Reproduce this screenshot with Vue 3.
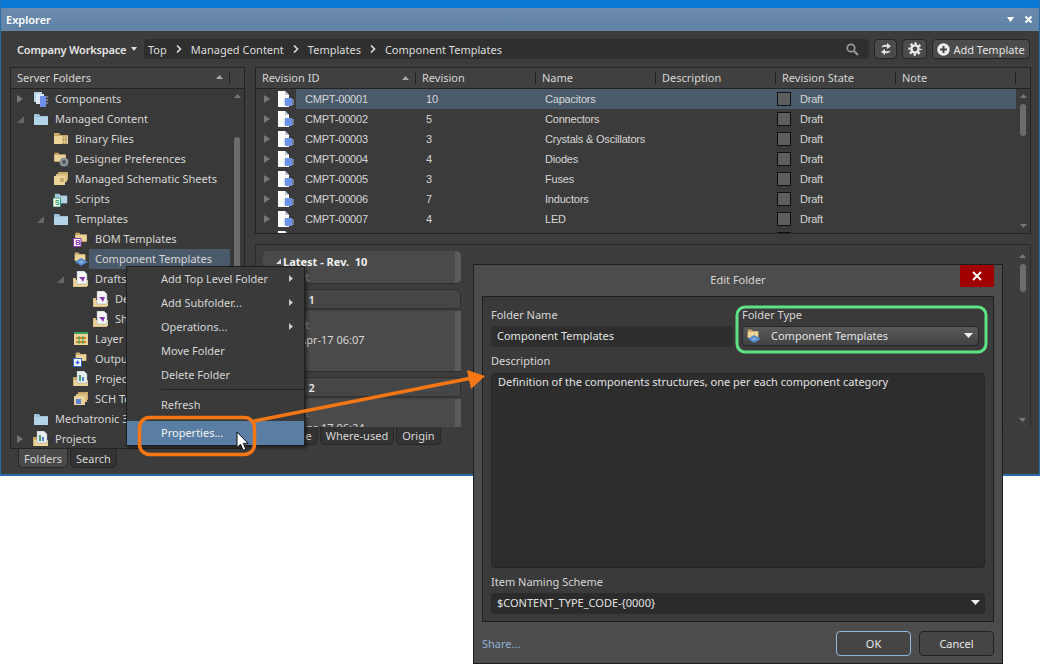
<script setup>
const tree = [
  { label: 'Components', level: 0, arrow: 'right', icon: 'i-comps' },
  { label: 'Managed Content', level: 0, arrow: 'down', icon: 'i-folder-blue' },
  { label: 'Binary Files', level: 1, icon: 'i-binary' },
  { label: 'Designer Preferences', level: 1, icon: 'i-prefs' },
  { label: 'Managed Schematic Sheets', level: 1, icon: 'i-sheets' },
  { label: 'Scripts', level: 1, icon: 'i-scripts' },
  { label: 'Templates', level: 1, arrow: 'down', icon: 'i-folder-blue' },
  { label: 'BOM Templates', level: 2, icon: 'i-bom' },
  { label: 'Component Templates', level: 2, icon: 'i-comp', selected: true },
  { label: 'Drafts', level: 2, arrow: 'down', icon: 'i-draft' },
  { label: 'Designs', level: 3, icon: 'i-draft' },
  { label: 'Sheets', level: 3, icon: 'i-draft' },
  { label: 'Layer Stacks', level: 2, icon: 'i-layer' },
  { label: 'Output Jobs', level: 2, icon: 'i-output' },
  { label: 'Projects', level: 2, icon: 'i-project' },
  { label: 'SCH Templates', level: 2, icon: 'i-sch' },
  { label: 'Mechatronic 3D', level: 0, icon: 'i-folder-blue' },
  { label: 'Projects', level: 0, arrow: 'right', icon: 'i-project' }
]

const columns = ['Revision ID', 'Revision', 'Name', 'Description', 'Revision State', 'Note']

const rows = [
  { id: 'CMPT-00001', rev: 10, name: 'Capacitors' },
  { id: 'CMPT-00002', rev: 5, name: 'Connectors' },
  { id: 'CMPT-00003', rev: 3, name: 'Crystals & Oscillators' },
  { id: 'CMPT-00004', rev: 4, name: 'Diodes' },
  { id: 'CMPT-00005', rev: 3, name: 'Fuses' },
  { id: 'CMPT-00006', rev: 7, name: 'Inductors' },
  { id: 'CMPT-00007', rev: 4, name: 'LED' },
  { id: 'CMPT-00008', rev: 2, name: 'Misc' }
]

const crumbs = ['Top', 'Managed Content', 'Templates', 'Component Templates']

const menu = [
  { label: 'Add Top Level Folder', sub: true },
  { label: 'Add Subfolder...', sub: true },
  { label: 'Operations...', sub: true },
  { label: 'Move Folder' },
  { label: 'Delete Folder' }
]
</script>

<template>
  <div class="page">
    <svg class="defs" aria-hidden="true">
      <symbol id="i-folder-blue" viewBox="0 0 16 16">
        <path d="M1 3h5l1.500 2H15v9H1z" fill="#9cc3dc" />
        <path d="M1 6h14v8H1z" fill="#b4d4e8" />
      </symbol>
      <symbol id="i-folder-yellow" viewBox="0 0 16 16">
        <path d="M1 2h5l1.500 2H15v9H1z" fill="#c9a868" />
        <path d="M1 5h14v8H1z" fill="#ecd39a" />
      </symbol>
      <symbol id="i-comps" viewBox="0 0 16 16">
        <path d="M1 1h8v10H1z" fill="#b4d4e8" />
        <path d="M3 3h8v10H3z" fill="#dfe9f2" />
        <path d="M7 5h6v11H7z" fill="#6f8fe8" />
        <path d="M13 6h2M13 9h2M13 12h2" stroke="#aab" />
      </symbol>
      <symbol id="i-doc-chip" viewBox="0 0 16 16">
        <path d="M0 0h7l4 4v12H0z" fill="#fff" />
        <path d="M7 0v4h4z" fill="#b9c6d6" />
        <path d="M7 7h7v8H7z" fill="#6f93ea" />
        <path d="M5.500 9h1.500M5.500 11h1.500M5.500 13h1.500M14 9h2M14 11h2M14 13h2" stroke="#a9bdf0" />
      </symbol>
      <symbol id="i-binary" viewBox="0 0 16 16">
        <use href="#i-folder-yellow" width="16" height="16" />
        <text x="9" y="8.500" class="icon-text" fill="#8a6a30">10</text>
        <text x="9" y="13" class="icon-text" fill="#8a6a30">10</text>
      </symbol>
      <symbol id="i-prefs" viewBox="0 0 16 16">
        <use href="#i-folder-yellow" width="14" height="13" />
        <circle cx="11" cy="11" r="4.500" fill="#8d959c" />
        <circle cx="11" cy="11" r="2" fill="#4f565c" />
      </symbol>
      <symbol id="i-sheets" viewBox="0 0 16 16">
        <path d="M5 1h10v8H5z" fill="#c9a868" />
        <path d="M3 3h11v8H3z" fill="#dcc083" />
        <path d="M1 5h11v9H1z" fill="#ecd39a" />
        <path d="M7 8h4M7 10h4" stroke="#9a7c45" />
      </symbol>
      <symbol id="i-scripts" viewBox="0 0 16 16">
        <use href="#i-folder-blue" width="16" height="14" />
        <path d="M0 7h7.500v9H0z" fill="#fff" stroke="#2f9a62" />
        <text x="1.800" y="14.300" class="icon-text-b" fill="#2f9a62">S</text>
      </symbol>
      <symbol id="i-bom" viewBox="0 0 16 16">
        <use href="#i-folder-yellow" width="16" height="13" />
        <path d="M.500 7.500h7.500v8H.500z" fill="#fff" stroke="#8a35b0" />
        <text x="2.200" y="14.200" class="icon-text-b" fill="#8a35b0">B</text>
      </symbol>
      <symbol id="i-comp" viewBox="0 0 16 16">
        <use href="#i-folder-yellow" width="14" height="12" />
        <path d="M2 11l6-4 7 4-7 4z" fill="#4f85c9" />
        <path d="M5 11l3-2 4 2-4 2z" fill="#7fa8dc" />
      </symbol>
      <symbol id="i-draft" viewBox="0 0 16 16">
        <path d="M0 7h3v8h11v1H0z" fill="#dcc083" />
        <path d="M1 9h14v6H1z" fill="#ecd39a" />
        <path d="M4 0h7l3 3v10H4z" fill="#f4f6f8" stroke="#9aa3ad" stroke-width=".5" />
        <path d="M6 6h6l-2 5-1.500-2.500z" fill="#8a35b0" />
      </symbol>
      <symbol id="i-layer" viewBox="0 0 16 16">
        <path d="M1 1h14v2H1z" fill="#3ca45a" />
        <path d="M1 3h14v11H1z" fill="#ecd39a" />
        <path d="M3 6h10v2H3zM3 10h10v2H3z" fill="#c8862f" />
        <path d="M6 5v8M10 5v8" stroke="#3ca45a" />
      </symbol>
      <symbol id="i-output" viewBox="0 0 16 16">
        <use href="#i-folder-yellow" width="16" height="12" />
        <path d="M.500 7.500h8v8h-8z" fill="#fff" stroke="#2a66c8" />
        <path d="M2.500 11.500h4M4.500 9.500v4" stroke="#2a66c8" stroke-width="1.400" />
      </symbol>
      <symbol id="i-project" viewBox="0 0 16 16">
        <path d="M0 6h4v8h11v1H0z" fill="#c9a868" />
        <path d="M1 9h14v6H1z" fill="#ecd39a" />
        <path d="M4 0h7l3 3v9H4z" fill="#e9edf1" stroke="#9aa3ad" stroke-width=".5" />
        <path d="M6 4h2v6H6z" fill="#4d9a6c" />
        <path d="M9 6h2v4H9z" fill="#4f85c9" />
      </symbol>
      <symbol id="i-sch" viewBox="0 0 16 16">
        <path d="M5 1h10v8H5z" fill="#c9a868" />
        <path d="M3 3h11v8H3z" fill="#dcc083" />
        <path d="M1 5h11v9H1z" fill="#ecd39a" />
        <path d="M3 8h5v5H3z" fill="#5a84d8" />
      </symbol>
    </svg>

    <div class="explorer">
      <header class="titlebar">
        <span class="title">Explorer</span>
        <span class="title-tools">
          <svg width="9" height="7" viewBox="0 0 9 7"><path d="M1 1h7L4.500 6z" fill="#fff" /></svg>
          <svg width="9" height="9" viewBox="0 0 9 9"><path d="M1.500 1.500l6 6M7.500 1.500l-6 6" stroke="#fff" stroke-width="2" /></svg>
        </span>
      </header>

      <div class="toolbar">
        <span class="workspace">Company Workspace</span>
        <svg class="workspace-caret" width="6" height="4" viewBox="0 0 6 4"><path d="M0 0h6L3 4z" fill="#ddd" /></svg>
        <div class="crumbs">
          <template v-for="(crumb, i) in crumbs" :key="crumb">
            <svg v-if="i" class="chevron" width="6" height="8" viewBox="0 0 6 8"><path d="M1 .500L4.500 4 1 7.500" fill="none" stroke="#ddd" stroke-width="1.600" /></svg>
            <span>{{ crumb }}</span>
          </template>
          <svg class="search" width="13" height="13" viewBox="0 0 13 13"><circle cx="5" cy="5" r="3.700" fill="none" stroke="#999" stroke-width="1.700" /><path d="M8 8l4 4" stroke="#999" stroke-width="2.200" /></svg>
        </div>
        <button class="tool-btn sync">
          <svg width="12" height="14" viewBox="0 0 12 14"><path d="M1.500 5.500C2 3 4.500 2.200 7 3V1l4 3.200L7 7V5C5 4.500 3.500 4.500 1.500 5.500zM10.500 8.500C10 11 7.500 11.800 5 11v2L1 9.800 5 7v2c2 .5 3.500.5 5.500-.5z" fill="#e4e4e4" /></svg>
        </button>
        <button class="tool-btn gear">
          <svg width="14" height="14" viewBox="0 0 14 14"><circle cx="7" cy="7" r="3.600" fill="none" stroke="#eee" stroke-width="2.400" /><circle cx="7" cy="7" r="5.700" fill="none" stroke="#eee" stroke-width="2" stroke-dasharray="2.400 2.075" stroke-dashoffset="1.200" /></svg>
        </button>
        <button class="tool-btn add">
          <svg width="13" height="13" viewBox="0 0 13 13"><circle cx="6.500" cy="6.500" r="6.200" fill="#eee" /><path d="M6.500 3v7M3 6.500h7" stroke="#444" stroke-width="2" /></svg>
          Add Template
        </button>
      </div>

      <div class="panes">
        <div class="left-col">
          <section class="tree-panel">
            <div class="tree-head">
              <span>Server Folders</span>
              <svg width="7" height="4" viewBox="0 0 7 4"><path d="M0 4h7L3.500 0z" fill="#aaa" /></svg>
            </div>
            <div class="tree-body">
              <ul class="tree">
                <li v-for="(item, i) in tree" :key="i" class="tree-row" :style="{ paddingLeft: item.level * 20 + 5 + 'px' }">
                  <span class="twist">
                    <svg v-if="item.arrow === 'right'" width="6" height="8" viewBox="0 0 6 8"><path d="M0 0l6 4-6 4z" fill="#777" /></svg>
                    <svg v-if="item.arrow === 'down'" width="7" height="7" viewBox="0 0 7 7"><path d="M7 0v7H0z" fill="#666" /></svg>
                  </span>
                  <svg class="tree-icon" width="16" height="16"><use :href="'#' + item.icon" width="16" height="16" /></svg>
                  <span class="tree-label" :class="{ selected: item.selected }">{{ item.label }}</span>
                </li>
              </ul>
              <div class="scrollbar tree-scroll">
                <svg width="7" height="4" viewBox="0 0 7 4"><path d="M0 4h7L3.500 0z" fill="#777" /></svg>
                <i class="thumb"></i>
              </div>
            </div>
          </section>
          <nav class="tabs tabs-left">
            <span class="tab active">Folders</span>
            <span class="tab">Search</span>
          </nav>
        </div>

        <div class="right-col">
          <section class="grid-panel">
            <div class="grid-head">
              <span v-for="col in columns" :key="col" class="head-cell">
                {{ col }}
                <svg v-if="col === 'Revision ID'" width="7" height="4" viewBox="0 0 7 4"><path d="M0 4h7L3.500 0z" fill="#aaa" /></svg>
              </span>
            </div>
            <div class="grid-body">
              <div class="grid-rows">
                <div v-for="(row, i) in rows" :key="row.id" class="grid-row" :class="{ selected: i === 0 }">
                  <span class="cell id-cell">
                    <svg class="row-arrow" width="6" height="8" viewBox="0 0 6 8"><path d="M0 0l6 4-6 4z" fill="#777" /></svg>
                    <svg class="row-icon" width="16" height="16"><use href="#i-doc-chip" width="16" height="16" /></svg>
                    <span class="id-text">{{ row.id }}</span>
                  </span>
                  <span class="cell rev-cell">{{ row.rev }}</span>
                  <span class="cell name-cell">{{ row.name }}</span>
                  <span class="cell"></span>
                  <span class="cell state-cell"><i class="swatch"></i>Draft</span>
                  <span class="cell"></span>
                </div>
              </div>
              <div class="scrollbar grid-scroll">
                <svg width="7" height="4" viewBox="0 0 7 4"><path d="M0 4h7L3.500 0z" fill="#777" /></svg>
                <i class="thumb"></i>
                <svg class="scroll-down" width="7" height="4" viewBox="0 0 7 4"><path d="M0 0h7L3.500 4z" fill="#777" /></svg>
              </div>
            </div>
          </section>

          <section class="details-panel">
            <div class="cards">
              <article class="card">
                <div class="card-body first">
                  <strong><svg class="latest-twist" width="5" height="5" viewBox="0 0 5 5"><path d="M5 0v5H0z" fill="#ddd" /></svg>Latest - Rev.&nbsp; 10</strong>
                  <span class="muted">Draft</span>
                </div>
              </article>
              <article class="card">
                <div class="card-head">Rev.&nbsp; 1</div>
                <div class="card-body tall">
                  <span class="muted">Draft</span>
                  <span>04-Apr-17 06:07</span>
                </div>
              </article>
              <article class="card">
                <div class="card-head">Rev.&nbsp; 2</div>
                <div class="card-body tall">
                  <span class="muted">Draft</span>
                  <span>04-Apr-17 06:24</span>
                </div>
              </article>
            </div>
            <div class="scrollbar details-scroll">
              <svg width="7" height="4" viewBox="0 0 7 4"><path d="M0 4h7L3.500 0z" fill="#777" /></svg>
              <i class="thumb"></i>
              <svg class="scroll-down" width="7" height="4" viewBox="0 0 7 4"><path d="M0 0h7L3.500 4z" fill="#777" /></svg>
            </div>
          </section>
          <nav class="tabs tabs-right">
            <span class="tab">Lifecycle</span>
            <span class="tab">Where-used</span>
            <span class="tab">Origin</span>
          </nav>
        </div>
      </div>
    </div>

    <!-- context menu -->
    <div class="menu">
      <div v-for="item in menu" :key="item.label" class="menu-item">
        {{ item.label }}
        <svg v-if="item.sub" width="4" height="7" viewBox="0 0 4 7"><path d="M0 0l4 3.500L0 7z" fill="#ccc" /></svg>
      </div>
      <hr class="menu-sep" />
      <div class="menu-item refresh">Refresh</div>
      <div class="menu-item active">Properties...</div>
    </div>

    <!-- dialog -->
    <div class="dialog">
      <div class="dialog-title">
        Edit Folder
        <button class="dialog-close">
          <svg width="10" height="10" viewBox="0 0 10 10"><path d="M1 1l8 8M9 1L1 9" stroke="#fff" stroke-width="1.800" /></svg>
        </button>
      </div>
      <div class="dialog-panel">
        <div class="field-row">
          <div class="field">
            <label>Folder Name</label>
            <div class="input">Component Templates</div>
          </div>
          <div class="field type-field">
            <label>Folder Type</label>
            <div class="select light">
              <svg class="select-icon" width="16" height="16"><use href="#i-comp" width="16" height="16" /></svg>
              Component Templates
              <svg class="select-caret" width="9" height="5" viewBox="0 0 9 5"><path d="M0 0h9L4.500 5z" fill="#eee" /></svg>
            </div>
          </div>
        </div>
        <label class="desc-label">Description</label>
        <div class="textarea">Definition of the components structures, one per each component category</div>
        <label class="scheme-label">Item Naming Scheme</label>
        <div class="select scheme">
          $CONTENT_TYPE_CODE-{0000}
          <svg class="select-caret" width="9" height="5" viewBox="0 0 9 5"><path d="M0 0h9L4.500 5z" fill="#eee" /></svg>
        </div>
      </div>
      <div class="dialog-foot">
        <a class="share">Share...</a>
        <button class="btn primary">OK</button>
        <button class="btn">Cancel</button>
      </div>
    </div>

    <!-- callouts drawn over everything -->
    <svg class="callouts" width="1040" height="664" viewBox="0 0 1040 664">
      <rect x="737" y="307" width="249" height="45" rx="8" fill="none" stroke="#5fe283" stroke-width="3" />
      <rect x="139.500" y="417.500" width="115" height="37" rx="10" fill="none" stroke="#f57615" stroke-width="3.500" />
      <path d="M254 421L472 378" stroke="#f57615" stroke-width="3.500" />
      <path d="M485 376L467 370 471 389z" fill="#f57615" />
      <path d="M237 432v15.500l3.600-3.200 2.500 6 2.700-1.100-2.500-5.800h4.800z" fill="#fff" stroke="#111" stroke-width="1" />
    </svg>
  </div>
</template>

<style scoped>
.page {
  position: relative;
  width: 1040px;
  height: 664px;
  overflow: hidden;
  background: #fff;
  font-family: "Noto Sans", "Liberation Sans", sans-serif;
  font-size: 11px;
  color: #d6d6d6;
}

.defs {
  display: none;
}

.icon-text {
  font-family: "Liberation Sans", sans-serif;
  font-size: 4.500px;
}

.icon-text-b {
  font-family: "Liberation Sans", sans-serif;
  font-size: 7.500px;
  font-weight: 700;
}

button {
  font: inherit;
  color: inherit;
}

/* explorer window */
.explorer {
  height: 476px;
  box-sizing: border-box;
  border: 1px solid #2a6ba6;
  border-top: 8px solid #0a78d4;
  border-bottom-width: 2px;
  background: #3c3c3c;
  display: flex;
  flex-direction: column;
}

.titlebar {
  height: 23px;
  flex: none;
  display: flex;
  align-items: center;
  justify-content: space-between;
  padding: 0 6px 0 5px;
  background: linear-gradient(#6b8bad, #5f82a6);
}

.title {
  font-weight: 600;
  color: #fff;
}

.title-tools {
  display: flex;
  align-items: center;
  gap: 9px;
}

.toolbar {
  height: 36px;
  flex: none;
  display: flex;
  align-items: center;
  padding: 0 9px 0 16px;
}

.workspace {
  width: 114px;
  flex: none;
  font-weight: 600;
  letter-spacing: -0.2px;
  color: #e4e4e4;
  white-space: nowrap;
}

.workspace-caret {
  margin: 0 7px 1px 0;
  flex: none;
}

.crumbs {
  flex: 1;
  height: 20px;
  display: flex;
  align-items: center;
  gap: 9px;
  padding: 0 10px 0 4px;
  background: #2f2f2f;
  border-radius: 4px;
  color: #dcdcdc;
}

.search {
  margin-left: auto;
}

.tool-btn {
  height: 20px;
  box-sizing: border-box;
  margin-left: 5px;
  padding: 0;
  display: flex;
  align-items: center;
  justify-content: center;
  background: #4b4b4b;
  border: 1px solid #252525;
  border-radius: 4px;
}

.sync {
  width: 23px;
}

.gear {
  width: 25px;
}

.add {
  width: 98px;
  gap: 3px;
  color: #e4e4e4;
}

.panes {
  flex: 1;
  min-height: 0;
  display: flex;
  gap: 10px;
  padding: 0 8px 0 9px;
}

.left-col {
  width: 235px;
  flex: none;
}

.right-col {
  flex: 1;
  min-width: 0;
}

/* server folder tree */
.tree-panel {
  height: 382px;
  box-sizing: border-box;
  border: 1px solid #232323;
  background: #393939;
  display: flex;
  flex-direction: column;
}

.tree-head {
  height: 21px;
  flex: none;
  box-sizing: border-box;
  padding: 0 0 1px 6px;
  display: flex;
  align-items: center;
  border-bottom: 1px solid #232323;
  background: #404040;
  position: relative;
}

.tree-head svg {
  position: absolute;
  left: 205px;
  top: 7px;
}

.tree-head::after {
  content: "";
  position: absolute;
  left: 218px;
  top: 4px;
  height: 12px;
  border-left: 1px solid #222;
}

.tree-body {
  flex: 1;
  min-height: 0;
  display: flex;
}

.tree {
  flex: 1;
  min-width: 0;
  list-style: none;
  margin: 0;
  padding: 0;
  overflow: hidden;
}

.tree-row {
  height: 20px;
  display: flex;
  align-items: center;
  white-space: nowrap;
}

.twist {
  width: 16px;
  flex: none;
  display: flex;
  align-items: center;
  padding-left: 1px;
  box-sizing: border-box;
}

.tree-icon {
  flex: none;
  margin: 0 0 0 1px;
}

.tree-label {
  flex: 1;
  height: 20px;
  line-height: 20px;
  padding-left: 6px;
}

.tree-label.selected {
  background: #4a5a6a;
}

.scrollbar {
  flex: none;
  display: flex;
  flex-direction: column;
  align-items: center;
  box-sizing: border-box;
}

.thumb {
  display: block;
  width: 6px;
  background: #6c6c6c;
  border-radius: 3px;
}

.tree-scroll {
  width: 14px;
  padding-top: 5px;
}

.tree-scroll .thumb {
  height: 303px;
  margin-top: 39px;
}

/* tabs */
.tabs {
  display: flex;
  gap: 2px;
}

.tabs-left {
  padding-left: 8px;
  height: 19px;
}

.tab {
  height: 100%;
  box-sizing: border-box;
  padding: 0 5px;
  display: flex;
  align-items: center;
  background: #333;
  border: 1px solid #272727;
  border-top: 0;
  border-radius: 0 0 5px 5px;
}

.tab.active {
  background: #4a4a4a;
}

.tabs-right {
  height: 18px;
  justify-content: flex-start;
  padding-left: 7px;
}

/* revisions grid */
.grid-panel {
  height: 167px;
  box-sizing: border-box;
  border: 1px solid #232323;
  background: #3b3b3b;
  margin-bottom: 10px;
  display: flex;
  flex-direction: column;
}

.grid-head {
  height: 21px;
  flex: none;
  box-sizing: border-box;
  display: grid;
  grid-template-columns: 160px repeat(5, 120px) 16px;
  align-items: center;
  border-bottom: 1px solid #232323;
  background: #404040;
  padding-bottom: 1px;
}

.head-cell {
  height: 12px;
  line-height: 12px;
  display: flex;
  align-items: center;
  justify-content: space-between;
  padding: 0 6px;
  border-right: 1px solid #222;
}

.grid-body {
  flex: 1;
  min-height: 0;
  display: flex;
}

.grid-rows {
  width: 760px;
  flex: none;
  overflow: hidden;
}

.grid-row {
  height: 20px;
  display: grid;
  grid-template-columns: 160px repeat(5, 120px);
  font-family: "Liberation Sans", sans-serif;
  font-size: 11px;
  letter-spacing: -0.2px;
}

.grid-row.selected .cell:not(.id-cell),
.grid-row.selected .id-text {
  background: #4a5a6a;
}

.cell {
  display: flex;
  align-items: center;
  height: 20px;
  white-space: nowrap;
}

.row-arrow {
  margin: 0 8px 0 8px;
}

.row-icon {
  flex: none;
  margin-left: 0;
}

.id-text {
  flex: 1;
  height: 20px;
  line-height: 20px;
  margin-left: 2px;
  padding-left: 9px;
}

.rev-cell {
  padding-left: 10px;
}

.name-cell {
  padding-left: 9px;
}

.state-cell {
  padding-left: 1px;
}

.swatch {
  width: 12px;
  height: 12px;
  border: 1px solid #111;
  background: #5e5e5e;
  margin-right: 9px;
}

.grid-scroll {
  flex: 1;
  position: relative;
  padding-top: 5px;
}

.grid-scroll .thumb {
  height: 32px;
  margin-top: 6px;
}

.scroll-down {
  margin-top: auto;
  margin-bottom: 5px;
}

/* revision cards */
.details-panel {
  height: 183px;
  box-sizing: border-box;
  border: 1px solid #2b2b2b;
  border-bottom: 0;
  background: #3d3d3d;
  display: flex;
  overflow: hidden;
}

.cards {
  width: 205px;
  flex: none;
  padding: 6px 0 0 7px;
  box-sizing: border-box;
}

.card {
  width: 198px;
  margin-bottom: 5px;
}

.card-head {
  height: 20px;
  display: flex;
  align-items: center;
  padding-left: 17px;
  box-sizing: border-box;
  background: #464646;
  border: 1px solid #2f2f2f;
  border-radius: 5px 5px 0 0;
  margin-bottom: 2px;
  color: #e8e8e8;
  font-weight: 600;
}

.card-body {
  box-sizing: border-box;
  display: flex;
  flex-direction: column;
  padding-left: 20px;
  background: linear-gradient(to right, #4a4a4a 192px, #5c5c5c 192px);
  border-bottom: 1px solid #2f2f2f;
}

.card-body.first {
  height: 33px;
  border-radius: 5px;
  padding-top: 3px;
}

.card-body.first strong {
  position: relative;
  color: #f2f2f2;
  font-weight: 700;
}

.latest-twist {
  position: absolute;
  left: -7px;
  top: 5px;
}

.card-body.tall {
  height: 61px;
  padding-top: 6px;
}

.muted {
  color: #8a8a8a;
}

.details-scroll {
  flex: 1;
  padding: 9px 0 0 554px;
}

.details-scroll .thumb {
  height: 28px;
  margin-top: 6px;
}

/* context menu */
.menu {
  position: absolute;
  left: 126px;
  top: 266px;
  width: 179px;
  height: 180px;
  box-sizing: border-box;
  background: #3a3a3a;
  border: 1px solid #1f1f1f;
  box-shadow: 2px 2px 3px rgba(0, 0, 0, 0.45);
}

.menu-item {
  height: 24px;
  box-sizing: border-box;
  display: flex;
  align-items: center;
  justify-content: space-between;
  padding: 0 11px 2px 34px;
}

.menu-sep {
  margin: 2px 0 3px 34px;
  border: 0;
  border-top: 1px solid #232323;
}

.menu-item.refresh {
  margin-bottom: 4px;
}

.menu-item.active {
  background: #5a7ea3;
  color: #f2f2f2;
}

/* edit folder dialog */
.dialog {
  position: absolute;
  left: 473px;
  top: 264px;
  width: 530px;
  height: 400px;
  box-sizing: border-box;
  padding: 0 8px;
  background: #4c4c4c;
  border: 1px solid #1d1d1d;
  display: flex;
  flex-direction: column;
}

.dialog-title {
  height: 31px;
  flex: none;
  box-sizing: border-box;
  padding-bottom: 3px;
  display: flex;
  align-items: center;
  justify-content: center;
  position: relative;
}

.dialog-close {
  position: absolute;
  right: 0;
  top: 0;
  width: 34px;
  height: 22px;
  padding: 0;
  display: flex;
  align-items: center;
  justify-content: center;
  background: #a00000;
  border: 0;
}

.dialog-panel {
  height: 326px;
  flex: none;
  box-sizing: border-box;
  padding: 11px 8px 0 8px;
  background: #3a3a3a;
  border: 1px solid #1f1f1f;
  display: flex;
  flex-direction: column;
}

.field-row {
  display: flex;
  gap: 9px;
}

.field {
  display: flex;
  flex-direction: column;
  width: 242px;
}

.field label,
.desc-label,
.scheme-label {
  height: 18px;
  line-height: 14px;
}

.type-field {
  width: 237px;
}

.input {
  height: 21px;
  line-height: 19px;
  padding-left: 6px;
  background: #2e2e2e;
  border-radius: 4px;
  color: #e2e2e2;
}

.select {
  height: 21px;
  box-sizing: border-box;
  padding-bottom: 2px;
  position: relative;
  display: flex;
  align-items: center;
  padding-left: 6px;
  background: #2b2b2b;
  border-radius: 4px;
  color: #e2e2e2;
}

.select.light {
  height: 20px;
  background: linear-gradient(#595959, #434343);
  border: 1px solid #262626;
  padding-left: 3px;
  padding-bottom: 1px;
}

.select-icon {
  margin-right: 9px;
}

.select-caret {
  margin-left: auto;
  margin-right: 5px;
}

.desc-label {
  margin-top: 7px;
  height: 19px;
}

.textarea {
  height: 195px;
  flex: none;
  box-sizing: border-box;
  padding: 0 6px;
  background: #2d2d2d;
  border: 1px solid #262626;
  border-radius: 4px;
  color: #e2e2e2;
}

.scheme-label {
  margin-top: 7px;
}

.dialog-foot {
  flex: 1;
  display: flex;
  align-items: flex-start;
  gap: 8px;
  padding-top: 9px;
}

.share {
  margin-right: auto;
  line-height: 25px;
  color: #8fb3d6;
}

.btn {
  width: 75px;
  height: 25px;
  padding: 0;
  background: #454545;
  border: 1px solid #222;
  border-radius: 4px;
  color: #e8e8e8;
}

.btn.primary {
  border-color: #8fb8dc;
}

.callouts {
  position: absolute;
  left: 0;
  top: 0;
  pointer-events: none;
}
</style>
